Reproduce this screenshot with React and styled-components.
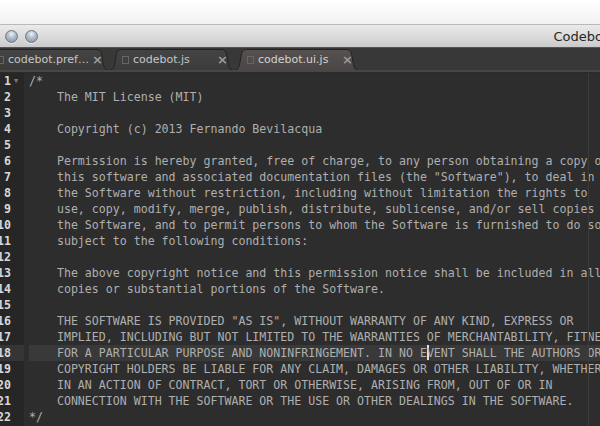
import React from 'react'
import styled, { createGlobalStyle } from 'styled-components'

const GlobalStyle = createGlobalStyle`
  html, body {
    margin: 0;
    padding: 0;
    background: #2d2d2d;
    overflow: hidden;
  }
`

const lineHeight = 16
const charWidth = 7

const lines = [
  '/*',
  '    The MIT License (MIT)',
  '',
  '    Copyright (c) 2013 Fernando Bevilacqua',
  '',
  '    Permission is hereby granted, free of charge, to any person obtaining a copy of',
  '    this software and associated documentation files (the "Software"), to deal in',
  '    the Software without restriction, including without limitation the rights to',
  '    use, copy, modify, merge, publish, distribute, sublicense, and/or sell copies of',
  '    the Software, and to permit persons to whom the Software is furnished to do so,',
  '    subject to the following conditions:',
  '',
  '    The above copyright notice and this permission notice shall be included in all',
  '    copies or substantial portions of the Software.',
  '',
  '    THE SOFTWARE IS PROVIDED "AS IS", WITHOUT WARRANTY OF ANY KIND, EXPRESS OR',
  '    IMPLIED, INCLUDING BUT NOT LIMITED TO THE WARRANTIES OF MERCHANTABILITY, FITNESS',
  '    FOR A PARTICULAR PURPOSE AND NONINFRINGEMENT. IN NO EVENT SHALL THE AUTHORS OR',
  '    COPYRIGHT HOLDERS BE LIABLE FOR ANY CLAIM, DAMAGES OR OTHER LIABILITY, WHETHER',
  '    IN AN ACTION OF CONTRACT, TORT OR OTHERWISE, ARISING FROM, OUT OF OR IN',
  '    CONNECTION WITH THE SOFTWARE OR THE USE OR OTHER DEALINGS IN THE SOFTWARE.',
  '*/'
]

const currentLine = 18
const caretColumn = 57

const Window = styled.div`
  width: 600px;
  height: 426px;
  display: flex;
  flex-direction: column;
  overflow: hidden;
  font-family: 'DejaVu Sans', 'Liberation Sans', sans-serif;
`

const Desktop = styled.div`
  height: 24px;
  flex: none;
  background: linear-gradient(#ffffff, #f1f1f1);
  border-bottom: 1px solid #b9b9b9;
`

const TitleBar = styled.div`
  height: 22px;
  flex: none;
  display: flex;
  align-items: center;
  padding-left: 5px;
  gap: 7px;
  background: linear-gradient(#ebebeb, #cbcbcb);
  border-bottom: 1px solid #555;
`

const Light = styled.span`
  width: 13px;
  height: 13px;
  border-radius: 50%;
  box-sizing: border-box;
  border: 1px solid #6c7884;
  background: radial-gradient(circle at 50% 28%, #eef3f7 0%, #b3c0cb 40%, #7f8d99 100%);
  box-shadow: 0 1px 0 rgba(255, 255, 255, 0.6);
`

const Title = styled.div`
  margin-left: auto;
  margin-right: -8px;
  font-size: 13px;
  color: #262626;
  white-space: nowrap;
`

const TabBar = styled.div`
  height: 22px;
  flex: none;
  display: flex;
  align-items: flex-end;
  background: #383838;
  margin-left: -17px;
`

const Tab = styled.div`
  position: relative;
  width: 127px;
  height: 22px;
  flex: none;
  margin-right: -2px;
  display: flex;
  align-items: center;
  padding: 1px 0 0 14px;
  box-sizing: border-box;
  color: ${p => (p.active ? '#d2d2d2' : '#c6c6c6')};
  font-size: 11px;
  white-space: nowrap;
  z-index: ${p => (p.active ? 2 : 1)};
`

const TabShape = styled.svg`
  position: absolute;
  left: 0;
  top: 0;
  width: 127px;
  height: 22px;
  z-index: -1;
`

const FileIcon = styled.span`
  width: 5px;
  height: 6px;
  flex: none;
  border: 1px solid #666;
  margin-right: 4px;
`

const TabName = styled.span`
  width: 84px;
  overflow: hidden;
`

const Close = styled.span`
  font-size: 13px;
  color: #9a9a9a;
  font-weight: bold;
`

const Strip = styled.div`
  height: 2px;
  flex: none;
  background: #4a4646;
  border-bottom: 1px solid #2a2a2a;
`

const Editor = styled.div`
  flex: 1;
  position: relative;
  display: flex;
  background: #2d2d2d;
  font-family: 'DejaVu Sans Mono', 'Liberation Mono', monospace;
  font-size: 11.6px;
  line-height: ${lineHeight}px;
  overflow: hidden;
`

const Gutter = styled.div`
  width: 24px;
  flex: none;
  background: #262626;
`

const Number = styled.div`
  height: ${lineHeight}px;
  position: relative;
  display: flex;
  justify-content: flex-end;
  padding-right: 13px;
  color: #d8d8d8;
  font-weight: bold;
  background: ${p => (p.current ? '#353535' : 'transparent')};
`

const Fold = styled.span`
  position: absolute;
  left: 14px;
  top: 0;
  font-size: 7px;
  color: #7a7a7a;
`

const Code = styled.div`
  flex: 1;
  padding-left: 5px;
  color: #afafaf;
  white-space: pre;
`

const Line = styled.div`
  height: ${lineHeight}px;
  background: ${p => (p.current ? '#393939' : 'transparent')};
`

const Caret = styled.span`
  display: inline-block;
  width: 0;
  height: 15px;
  vertical-align: top;
  border-left: 2px solid #e0e0e0;
  margin-right: -2px;
`

const Ruler = styled.div`
  position: absolute;
  top: 0;
  bottom: 0;
  left: ${29 + 80 * charWidth - 1}px;
  width: 1px;
  background: #3c3c3c;
`

const tabs = [
  { name: 'codebot.pref…' },
  { name: 'codebot.js' },
  { name: 'codebot.ui.js', active: true }
]

function TabBackground ({ active, id }) {
  return (
    <TabShape viewBox='0 0 127 22'>
      <defs>
        <linearGradient id={id} x1='0' y1='0' x2='0' y2='1'>
          <stop offset='0' stopColor={active ? '#56514f' : '#444'} />
          <stop offset='1' stopColor={active ? '#4a4646' : '#3b3b3b'} />
        </linearGradient>
      </defs>
      <path
        d='M0 22.5 C5 22.5 6 20 7 14 L8.5 6 C9.2 3 10.5 1.5 14 1.5 L113 1.5 C116.5 1.5 117.8 3 118.5 6 L120 14 C121 20 122 22.5 127 22.5'
        fill={`url(#${id})`}
        stroke='#232323'
        strokeWidth='1'
      />
    </TabShape>
  )
}

export default function App () {
  return (
    <Window>
      <GlobalStyle />
      <Desktop />
      <TitleBar>
        <Light />
        <Light />
        <Title>Codebot</Title>
      </TitleBar>
      <TabBar>
        {tabs.map((t, i) => (
          <Tab key={t.name} active={t.active}>
            <TabBackground active={t.active} id={`tab${i}`} />
            <FileIcon />
            <TabName>{t.name}</TabName>
            <Close>×</Close>
          </Tab>
        ))}
      </TabBar>
      <Strip />
      <Editor>
        <Gutter>
          {lines.map((_, i) => (
            <Number key={i} current={i + 1 === currentLine}>
              {i + 1}
              {i === 0 && <Fold>▼</Fold>}
            </Number>
          ))}
        </Gutter>
        <Code>
          {lines.map((text, i) => (
            <Line key={i} current={i + 1 === currentLine}>
              {i + 1 === currentLine ? (
                <>
                  {text.slice(0, caretColumn)}
                  <Caret />
                  {text.slice(caretColumn)}
                </>
              ) : (
                text || ' '
              )}
            </Line>
          ))}
        </Code>
        <Ruler />
      </Editor>
    </Window>
  )
}
